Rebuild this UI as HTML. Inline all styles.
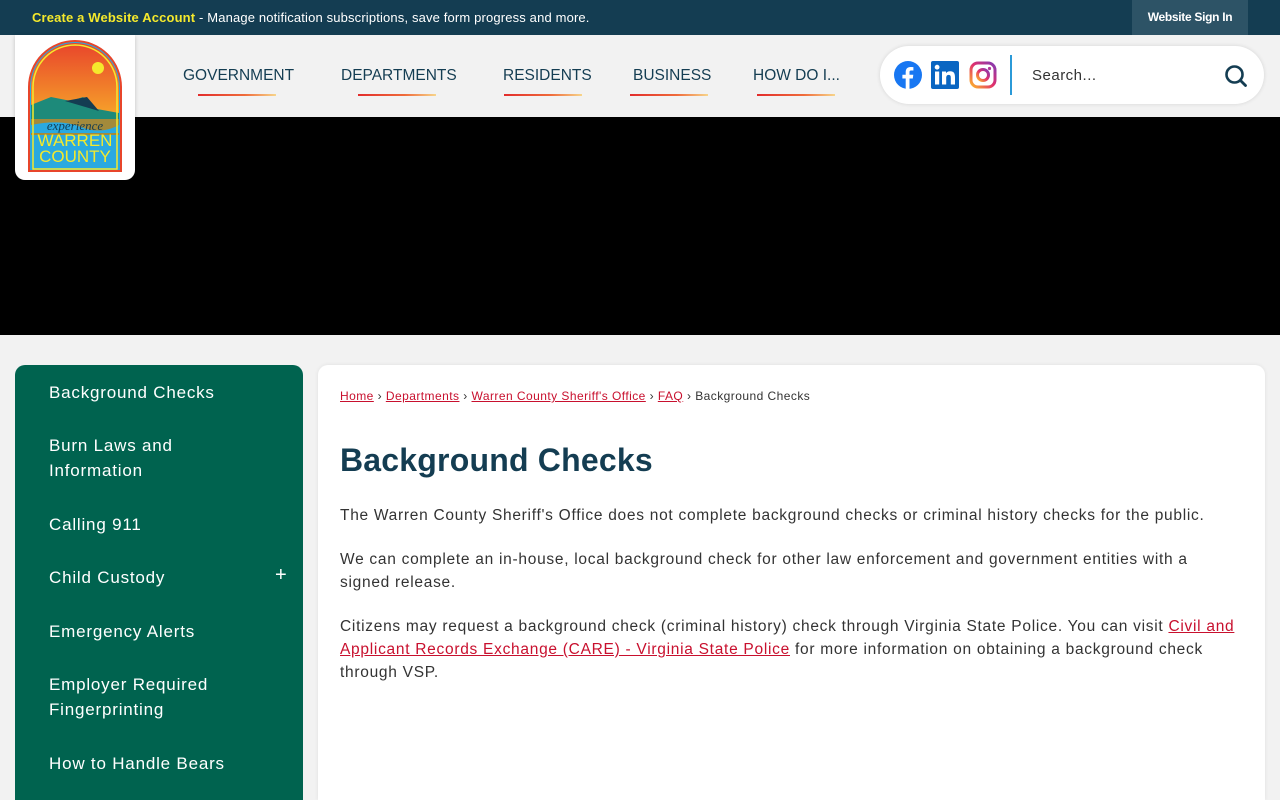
<!DOCTYPE html>
<html><head><meta charset="utf-8"><style>
*{box-sizing:border-box;margin:0;padding:0}
html,body{width:1280px;height:800px;overflow:hidden}
body{background:#f2f2f2;font-family:"Liberation Sans",sans-serif;position:relative}
.top{position:absolute;left:0;top:0;width:1280px;height:35px;background:#143d52;color:#fff;font-size:13px}
.top .msg{position:absolute;left:32px;top:10px;letter-spacing:0.15px}
.top .msg b{color:#f5e92c}
.top .sign{position:absolute;left:1132px;top:0;width:116px;height:35px;background:#2d5366;font-size:12px;font-weight:bold;text-align:center;line-height:35px;letter-spacing:-0.3px}
.hdr{position:absolute;top:35px;left:0;width:1280px;height:82px;background:#f2f2f2}
.nav a{position:absolute;top:67px;font-size:15.5px;color:#143d52;text-decoration:none;letter-spacing:0px}
.nav i{position:absolute;top:94px;height:2px;background:linear-gradient(90deg,#e22c2c,#ef6b3b 60%,#f7d58b)}
.hero{position:absolute;top:117px;left:0;width:1280px;height:218px;background:#000}
.logo{position:absolute;left:15px;top:35px;width:120px;height:145px;background:#fff;border-radius:0 0 10px 10px;box-shadow:0 1px 4px rgba(0,0,0,.2)}
.sbox{position:absolute;left:880px;top:46px;width:384px;height:58px;background:#fff;border-radius:29px;box-shadow:0 0 4px rgba(0,0,0,.12)}
.side{position:absolute;left:15px;top:365px;width:288px;height:435px;background:#00634f;border-radius:10px 10px 0 0}
.side div{position:absolute;left:34px;color:#fff;font-size:17px;line-height:25px;letter-spacing:0.8px}
.main{position:absolute;left:318px;top:365px;width:947px;height:435px;background:#fff;border-radius:10px 10px 0 0;box-shadow:0 0 4px rgba(0,0,0,.08)}
.bc{position:absolute;left:22px;top:24px;font-size:12px;color:#333;letter-spacing:0.45px}
.bc a{color:#c8102e;text-decoration:underline}
h1{position:absolute;left:22px;top:77px;font-size:32px;color:#143d52;font-weight:bold;letter-spacing:0.2px}
.p{position:absolute;left:22px;font-size:15.5px;color:#333;line-height:23px;width:900px;letter-spacing:0.72px}
.p a{color:#c8102e;text-decoration:underline}
</style></head><body>
<div class="top"><div class="msg"><b>Create a Website Account</b> - Manage notification subscriptions, save form progress and more.</div><div class="sign">Website Sign In</div></div>
<div class="hdr"></div>
<div class="nav">
<a style="left:183px">GOVERNMENT</a><i style="left:198px;width:78px"></i>
<a style="left:341px">DEPARTMENTS</a><i style="left:358px;width:78px"></i>
<a style="left:503px">RESIDENTS</a><i style="left:504px;width:78px"></i>
<a style="left:633px">BUSINESS</a><i style="left:630px;width:78px"></i>
<a style="left:753px">HOW DO I...</a><i style="left:757px;width:78px"></i>
</div>
<div class="hero"></div>
<div class="logo">
<svg width="120" height="145" viewBox="0 0 120 145">
<defs><linearGradient id="sky" x1="0" y1="0" x2="0" y2="1"><stop offset="0" stop-color="#e8452b"/><stop offset="1" stop-color="#f7a72a"/></linearGradient></defs>
<path d="M14 136V52a46 46 0 0 1 92 0v84z" fill="#2aa9e0" stroke="#e8452b" stroke-width="2"/>
<path d="M16 84V52a44 44 0 0 1 88 0v32z" fill="url(#sky)"/>
<circle cx="83" cy="33" r="6" fill="#f5e92c"/>
<path d="M16 70l20-8 20 4 12-4 14 12 22 4v6H16z" fill="#1d8a7a"/>
<path d="M50 66l22-4 12 14z" fill="#143d52"/>
<path d="M16 84h88v16H16z" fill="#a38a3b"/>
<path d="M16 90q30-6 50 2t38-2v8H16z" fill="#2aa9e0"/>
<path d="M18 52a42 42 0 0 1 84 0v82H18z" fill="none" stroke="#f5e92c" stroke-width="1.5"/>
<text x="60" y="95" text-anchor="middle" font-family="Liberation Serif" font-style="italic" font-size="13" fill="#143d52">experience</text>
<text x="60" y="111" text-anchor="middle" font-size="17" fill="#f5e92c" font-family="Liberation Sans">WARREN</text>
<text x="60" y="127" text-anchor="middle" font-size="17" fill="#f5e92c" font-family="Liberation Sans">COUNTY</text>
</svg></div>
<div class="sbox">
<svg style="position:absolute;left:14px;top:15px" width="28" height="28" viewBox="0 0 28 28"><circle cx="14" cy="14" r="14" fill="#1877f2"/><path d="M15.5 28V17.5h3.3l.5-3.8h-3.8v-2.4c0-1.1.3-1.8 1.9-1.8h2V6.1a27 27 0 0 0-2.9-.1c-2.9 0-4.8 1.7-4.8 5v2.7H8.4v3.8h3.3V28z" fill="#fff"/></svg>
<svg style="position:absolute;left:51px;top:15px" width="28" height="28" viewBox="0 0 28 28"><rect width="28" height="28" rx="2" fill="#0a66c2"/><rect x="4" y="10.5" width="4.2" height="13" fill="#fff"/><circle cx="6.1" cy="6.2" r="2.4" fill="#fff"/><path d="M11 10.5h4v1.8c.6-1.1 2-2.1 4.1-2.1 4.2 0 4.9 2.7 4.9 6.3v7h-4.2v-6.2c0-1.5 0-3.4-2.1-3.4s-2.5 1.6-2.5 3.3v6.3H11z" fill="#fff"/></svg>
<svg style="position:absolute;left:89px;top:15px" width="28" height="28" viewBox="0 0 28 28"><defs><linearGradient id="ig" x1="0" y1="1" x2="1" y2="0"><stop offset="0" stop-color="#fdb52b"/><stop offset=".5" stop-color="#e1306c"/><stop offset="1" stop-color="#833ab4"/></linearGradient></defs><rect x="2" y="2" width="24" height="24" rx="7" fill="none" stroke="url(#ig)" stroke-width="3"/><circle cx="14" cy="14" r="5.5" fill="none" stroke="url(#ig)" stroke-width="3"/><circle cx="20.5" cy="7.5" r="1.6" fill="#b13a9b"/></svg>
<div style="position:absolute;left:130px;top:9px;width:2px;height:40px;background:#2b9ad8"></div>
<div style="position:absolute;left:152px;top:21px;font-size:15px;color:#333;letter-spacing:0.5px">Search...</div>
<svg style="position:absolute;left:344px;top:18px" width="24" height="24" viewBox="0 0 24 24"><circle cx="10.5" cy="10.5" r="8" fill="none" stroke="#143d52" stroke-width="2.6"/><path d="M16.5 16.5l5 5" stroke="#143d52" stroke-width="2.8" stroke-linecap="round"/></svg>
</div>
<div class="side">
<div style="top:15px">Background Checks</div>
<div style="top:68px">Burn Laws and<br>Information</div>
<div style="top:147px">Calling 911</div>
<div style="top:200px">Child Custody</div>
<div style="top:198px;left:260px;font-size:20px">+</div>
<div style="top:254px">Emergency Alerts</div>
<div style="top:307px">Employer Required<br>Fingerprinting</div>
<div style="top:386px">How to Handle Bears</div>
</div>
<div class="main">
<div class="bc"><a>Home</a> › <a>Departments</a> › <a>Warren County Sheriff's Office</a> › <a>FAQ</a> › Background Checks</div>
<h1>Background Checks</h1>
<div class="p" style="top:139px">The Warren County Sheriff's Office does not complete background checks or criminal history checks for the public.</div>
<div class="p" style="top:183px">We can complete an in-house, local background check for other law enforcement and government entities with a signed release.</div>
<div class="p" style="top:250px">Citizens may request a background check (criminal history) check through Virginia State Police. You can visit <a>Civil and Applicant Records Exchange (CARE) - Virginia State Police</a> for more information on obtaining a background check through VSP.</div>
</div>
</body></html>
